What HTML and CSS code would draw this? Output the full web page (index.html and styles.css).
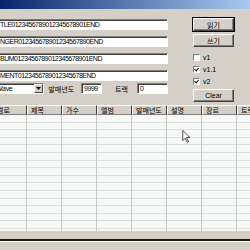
FILE: index.html
```html
<!DOCTYPE html>
<html lang="ko">
<head>
    <meta charset="UTF-8">
    <title>ID3 Tag</title>
    <link rel="stylesheet" href="styles.css">
</head>
<body>
    <div class="window">
        <div class="titlebar"></div>
        <div class="top">
            <div class="fields">
                <input class="field" type="text" value="TLE0123456789012345678901END">
                <input class="field" type="text" value="NGER012345678901234567890END">
                <input class="field" type="text" value="BUM0123456789012345678901END">
                <input class="field" type="text" value="MENT0123456789012345678END">
                <div class="row">
                    <div class="combo">
                        <span class="combo-text">Wave</span>
                        <span class="combo-btn">
                            <svg width="5" height="3" viewBox="0 0 5 3"><path d="M0 0h5L2.5 3z" fill="#000"/></svg>
                        </span>
                    </div>
                    <span class="label year-label">발매년도</span>
                    <input class="field year" type="text" value="9999">
                    <span class="label track-label">트랙</span>
                    <input class="field track" type="text" value="0">
                </div>
            </div>
            <div class="side">
                <button class="btn" id="read">읽기</button>
                <button class="btn" id="write">쓰기</button>
                <div class="checks">
                    <label class="check"><span class="box"></span>v1</label>
                    <label class="check"><span class="box checked"></span>v1.1</label>
                    <label class="check"><span class="box checked"></span>v2</label>
                </div>
                <button class="btn" id="clear">Clear</button>
            </div>
        </div>
        <div class="list">
            <div class="list-head">
                <div class="col first">경로</div>
                <div class="col">제목</div>
                <div class="col">가수</div>
                <div class="col">앨범</div>
                <div class="col">발매년도</div>
                <div class="col">설명</div>
                <div class="col">장르</div>
                <div class="col">트랙</div>
            </div>
            <div class="list-body">
                <div class="cell first"></div>
                <div class="cell"></div>
                <div class="cell"></div>
                <div class="cell"></div>
                <div class="cell"></div>
                <div class="cell"></div>
                <div class="cell"></div>
                <div class="cell"></div>
            </div>
        </div>
        <div class="status"></div>
        <svg class="cursor" width="9" height="13" viewBox="0 0 12 19">
            <path d="M0.5 0.5v15l3.5-3.5 3 6 2-1-3-6h5z" fill="#fff" stroke="#000" stroke-width="1"/>
        </svg>
    </div>
</body>
</html>
```

FILE: styles.css
```css
body {
    margin: 0;
    padding: 0;
    background-color: #d4d0c8;
    overflow: hidden;
    font-family: "Noto Sans CJK KR", "Liberation Sans", sans-serif;
    font-size: 7px;
    color: #000;
}

.window {
    position: relative;
    width: 250px;
    height: 250px;
    overflow: hidden;
}

.titlebar {
    height: 9px;
    background: linear-gradient(to right, #0a246a, #a6caf0);
}

.top {
    display: flex;
    align-items: flex-start;
    padding-top: 9px;
}

.fields {
    display: flex;
    flex-direction: column;
    gap: 6px;
    width: 171px;
    margin-left: -3px;
    margin-top: 1px;
}

.field {
    box-sizing: border-box;
    height: 11px;
    margin: 0;
    padding: 0 0 0 2px;
    border: 1px solid;
    border-color: #808080 #fff #fff #808080;
    box-shadow: inset 1px 1px 0 #404040;
    background: #fff;
    font-family: "Liberation Sans", sans-serif;
    font-size: 7px;
    letter-spacing: -0.5px;
    color: #000;
    outline: none;
}

.row {
    display: flex;
    align-items: center;
    margin-top: -4px;
}

.combo {
    box-sizing: border-box;
    display: flex;
    align-items: center;
    width: 52px;
    height: 11px;
    margin-left: -4px;
    border: 1px solid;
    border-color: #808080 #fff #fff #808080;
    box-shadow: inset 1px 1px 0 #404040;
    background: #fff;
}

.combo-text {
    flex: 1;
    padding-left: 2px;
    font-family: "Liberation Sans", sans-serif;
    letter-spacing: -0.3px;
}

.combo-btn {
    box-sizing: border-box;
    display: flex;
    align-items: center;
    justify-content: center;
    width: 9px;
    height: 9px;
    background: #d4d0c8;
    border: 1px solid;
    border-color: #fff #404040 #404040 #fff;
}

.label {
    white-space: nowrap;
}

.year-label {
    margin-left: 4px;
}

.year {
    width: 21px;
    margin-left: 7px;
}

.track-label {
    margin-left: 13px;
}

.track {
    width: 31px;
    margin-left: 9px;
}

.side {
    display: flex;
    flex-direction: column;
    width: 41px;
    margin-left: 25px;
}

.btn {
    box-sizing: border-box;
    height: 13px;
    margin: 0;
    padding: 0;
    background: #d4d0c8;
    border: 1px solid;
    border-color: #fff #404040 #404040 #fff;
    box-shadow: inset -1px -1px 0 #808080;
    font-family: "Noto Sans CJK KR", "Liberation Sans", sans-serif;
    font-size: 7px;
    line-height: 10px;
    color: #000;
}

#read {
    outline: 1px solid #000;
}

#write {
    margin-top: 3px;
}

.checks {
    display: flex;
    flex-direction: column;
    margin-top: 4px;
}

.check {
    display: flex;
    align-items: center;
    height: 12px;
    font-family: "Liberation Sans", sans-serif;
}

.box {
    box-sizing: border-box;
    position: relative;
    width: 7px;
    height: 7px;
    margin-right: 3px;
    background: #fff;
    border: 1px solid;
    border-color: #808080 #fff #fff #808080;
}

.box.checked::after {
    content: "";
    position: absolute;
    left: 1px;
    top: 0px;
    width: 2px;
    height: 3px;
    border: solid #000;
    border-width: 0 1.5px 1.5px 0;
    transform: rotate(40deg);
}

#clear {
    margin-top: 2px;
    font-family: "Liberation Sans", sans-serif;
}

.list {
    margin-top: 3px;
    margin-left: -7px;
    width: 280px;
}

.list-head {
    display: flex;
    height: 10px;
}

.col {
    box-sizing: border-box;
    width: 35px;
    padding-left: 3px;
    border: 1px solid;
    border-color: #fff #404040 #808080 #fff;
    background: #d4d0c8;
    line-height: 8px;
    white-space: nowrap;
}

.col.first,
.cell.first {
    width: 34px;
}

.list-body {
    display: flex;
    height: 116px;
    background-color: #f6f9f7;
    background-image: repeating-linear-gradient(to bottom, transparent 0, transparent 6.6px, #dcdfdc 6.6px, #dcdfdc 7.6px);
}

.cell {
    box-sizing: border-box;
    width: 35px;
    border-right: 1px solid #c6c8c6;
}

.status {
    height: 8px;
    border-bottom: 2px solid #1a1a1a;
    box-shadow: 0 1px 0 #fff;
}

.cursor {
    position: absolute;
    left: 182px;
    top: 130px;
}
```
